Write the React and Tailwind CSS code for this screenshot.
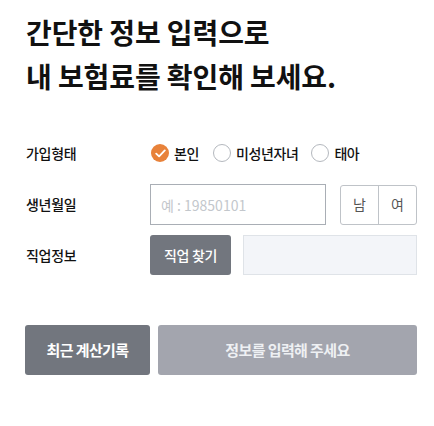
export default function App() {
  const font = { fontFamily: '"Noto Sans CJK KR", "Noto Sans", sans-serif' };
  const labelCls = "w-[124px] shrink-0 text-[14px] font-medium tracking-[-0.3px] text-[#111]";

  return (
    <div className="w-[434px] h-[426px] bg-white" style={font}>
      <div className="pl-[26px] pr-[17px] pt-[10px]">
        <h1 className="text-[28px] font-bold leading-[44px] tracking-[-0.1px] text-[#111]">
          간단한 정보 입력으로
          <br />
          내 보험료를 확인해 보세요.
        </h1>

        <div className="mt-[45px] flex items-center h-[20px]">
          <div className={labelCls}>가입형태</div>
          <div className="flex items-center text-[14px] font-medium tracking-[-0.4px] text-[#111]">
            <label className="ml-[1px] flex items-center gap-[5px]">
              <span className="flex h-[18px] w-[18px] items-center justify-center rounded-full bg-[#e8823a]">
                <svg width="11" height="9" viewBox="0 0 11 9" fill="none">
                  <path d="M1.2 4.6 L4.1 7.4 L9.8 1.4" stroke="white" strokeWidth="1.8" strokeLinecap="round" strokeLinejoin="round" />
                </svg>
              </span>
              본인
            </label>
            <label className="ml-[14px] flex items-center gap-[5px]">
              <span className="h-[18px] w-[18px] rounded-full border border-[#b4b8be] bg-white" />
              미성년자녀
            </label>
            <label className="ml-[13px] flex items-center gap-[5px]">
              <span className="h-[18px] w-[18px] rounded-full border border-[#b4b8be] bg-white" />
              태아
            </label>
          </div>
        </div>

        <div className="mt-[21px] flex items-center">
          <div className={labelCls}>생년월일</div>
          <div className="flex flex-1 items-center">
            <input
              className="h-[41px] w-[176px] border border-[#a9aeb5] px-[10px] text-[14px] text-[#333] placeholder:text-[#c3c7cc] focus:outline-none"
              placeholder="예 : 19850101"
              style={font}
            />
            <div className="ml-[14px] flex h-[40px] flex-1 rounded-[3px] border border-[#bfc3c8] text-[14px] text-[#555]">
              <button className="flex-1 border-r border-[#bfc3c8]">남</button>
              <button className="flex-1">여</button>
            </div>
          </div>
        </div>

        <div className="mt-[10px] flex items-center">
          <div className={labelCls}>직업정보</div>
          <div className="flex flex-1 items-center">
            <button className="h-[40px] w-[81px] rounded-[3px] bg-[#72767e] text-[14px] font-medium tracking-[-0.3px] text-white">
              직업 찾기
            </button>
            <div className="ml-[12px] h-[40px] flex-1 border border-[#dfe3e8] bg-[#f3f5f9]" />
          </div>
        </div>

        <div className="mt-[50px] ml-[-1px] flex gap-[8px]">
          <button className="h-[50px] w-[125px] rounded-[3px] bg-[#72767e] text-[15px] font-bold tracking-[-0.6px] text-white">
            최근 계산기록
          </button>
          <button className="h-[50px] flex-1 rounded-[3px] bg-[#a3a5ae] text-[15px] font-bold tracking-[-0.6px] text-[#eef0f3]">
            정보를 입력해 주세요
          </button>
        </div>
      </div>
    </div>
  );
}
